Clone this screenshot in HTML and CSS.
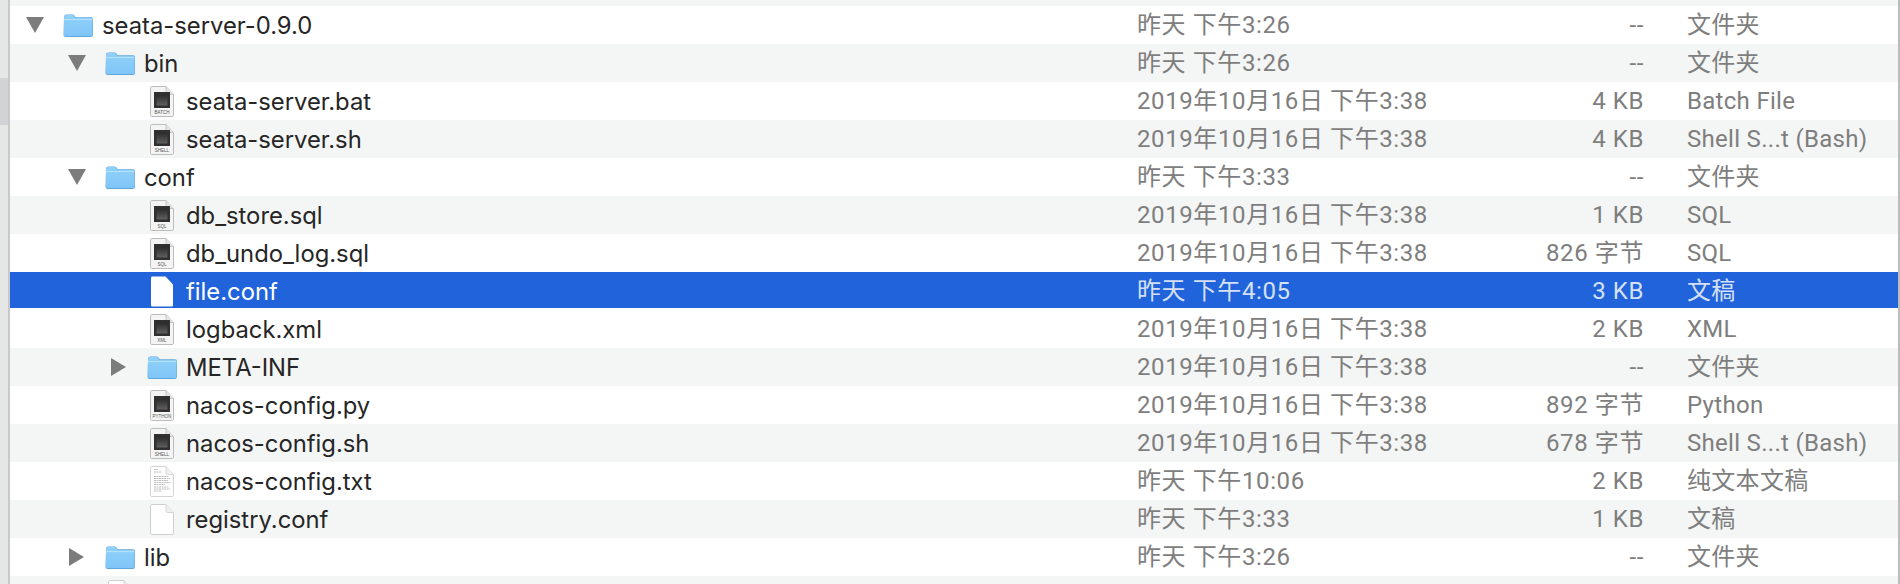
FILE: index.html
```html
<!DOCTYPE html>
<html lang="zh-CN">
<head>
    <meta charset="UTF-8">
    <title>seata-server-0.9.0</title>
    <link rel="stylesheet" href="styles.css">
</head>
<body>
    <!-- shared icons -->
    <svg class="defs" width="0" height="0">
        <defs>
            <linearGradient id="folder-fill" x1="0" y1="0" x2="0" y2="1">
                <stop offset="0" stop-color="#90d1fa"/>
                <stop offset="1" stop-color="#7fc5f7"/>
            </linearGradient>
            <linearGradient id="exec-fill" x1="0" y1="0" x2="0" y2="1">
                <stop offset="0" stop-color="#2a2a2a"/>
                <stop offset="1" stop-color="#5f5f5f"/>
            </linearGradient>
        </defs>
        <symbol id="folder" viewBox="0 0 30 24">
            <path d="M1 4.5C1 2.5 1.8 1.5 3.5 1.5H9C10.5 1.5 11 2 11.8 3L12.800 4.200H28C29.200 4.200 30 5 30 6.200V21.500C30 23 29.200 24 28 24H2.500C1.200 24 0.500 23 0.500 21.500Z" fill="#5fa8de"/>
            <path d="M1 5C1 3 2 2 3.500 2H9C10 2 10.800 2.500 11.500 3.500L12.500 5H28C29 5 29.500 5.600 29.500 6.500V21.500C29.500 22.500 29 23 28 23H2.500C1.500 23 1 22.500 1 21.500Z" fill="url(#folder-fill)"/>
            <path d="M1 6.600H29.500" stroke="#b9e3fd" stroke-width="1"/>
        </symbol>
        <symbol id="doc" viewBox="0 0 24 31">
            <path d="M0.500 2C0.500 1 1 0.500 2 0.500H16L23.500 8.500V29C23.500 30 23 30.500 22 30.500H2C1 30.500 0.500 30 0.500 29Z" fill="#fff" stroke="#cfcfcf"/>
            <path d="M16 0.500V7C16 8 16.500 8.500 17.500 8.500H23.500" fill="#f0f0f0" stroke="#d4d4d4"/>
        </symbol>
        <symbol id="exec" viewBox="0 0 24 31">
            <path d="M0.500 2C0.500 1 1 0.500 2 0.500H16L23.500 8.500V29C23.500 30 23 30.500 22 30.500H2C1 30.500 0.500 30 0.500 29Z" fill="#f4f4f4" stroke="#bcbcbc"/>
            <path d="M16 0.500V7C16 8 16.500 8.500 17.500 8.500H23.500" fill="#e4e4e4" stroke="#c4c4c4"/>
            <rect x="4" y="6" width="16" height="16" fill="#303030"/>
            <rect x="6.500" y="8.500" width="11" height="11" fill="url(#exec-fill)"/>
        </symbol>
        <symbol id="text-doc" viewBox="0 0 24 31">
            <path d="M0.500 2C0.500 1 1 0.500 2 0.500H16L23.500 8.500V29C23.500 30 23 30.500 22 30.500H2C1 30.500 0.500 30 0.500 29Z" fill="#fff" stroke="#d4d4d4"/>
            <path d="M16 0.500V7C16 8 16.500 8.500 17.500 8.500H23.500" fill="#f0f0f0" stroke="#d8d8d8"/>
            <path d="M4 3.500H8M4 6H12M4 10.500H19M4 12.500H20M4 14.500H18M4 16.500H20M4 18.500H15M4 21H19M4 23H20M4 25H12" stroke="#bdbdbd" stroke-width="1" stroke-dasharray="2 0.500"/>
        </symbol>
        <symbol id="tw-down" viewBox="0 0 18 16">
            <polygon points="0,0 18,0 9,16" fill="#7c7c7c"/>
        </symbol>
        <symbol id="tw-right" viewBox="0 0 15 18">
            <polygon points="0,0 15,9 0,18" fill="#7c7c7c"/>
        </symbol>
    </svg>

    <div class="window">
        <div class="sidebar-edge">
            <div class="sidebar-active"></div>
        </div>

        <div class="list">
            <div class="row-cut"></div>

            <div class="row">
                <div class="name lv0">
                    <span class="twisty"><svg class="tw-d"><use href="#tw-down"/></svg></span>
                    <span class="icon"><svg class="folder"><use href="#folder"/></svg></span>
                    <span class="fname">seata-server-0.9.0</span>
                </div>
                <div class="date">昨天 下午3:26</div>
                <div class="size">--</div>
                <div class="kind">文件夹</div>
            </div>

            <div class="row">
                <div class="name lv1">
                    <span class="twisty"><svg class="tw-d"><use href="#tw-down"/></svg></span>
                    <span class="icon"><svg class="folder"><use href="#folder"/></svg></span>
                    <span class="fname">bin</span>
                </div>
                <div class="date">昨天 下午3:26</div>
                <div class="size">--</div>
                <div class="kind">文件夹</div>
            </div>

            <div class="row">
                <div class="name lv2">
                    <span class="twisty"></span>
                    <span class="icon"><svg class="file" viewBox="0 0 24 31"><use href="#exec"/><text class="badge" x="12" y="28">BATCH</text></svg></span>
                    <span class="fname">seata-server.bat</span>
                </div>
                <div class="date">2019年10月16日 下午3:38</div>
                <div class="size">4 KB</div>
                <div class="kind">Batch File</div>
            </div>

            <div class="row">
                <div class="name lv2">
                    <span class="twisty"></span>
                    <span class="icon"><svg class="file" viewBox="0 0 24 31"><use href="#exec"/><text class="badge" x="12" y="28">SHELL</text></svg></span>
                    <span class="fname">seata-server.sh</span>
                </div>
                <div class="date">2019年10月16日 下午3:38</div>
                <div class="size">4 KB</div>
                <div class="kind">Shell S...t (Bash)</div>
            </div>

            <div class="row">
                <div class="name lv1">
                    <span class="twisty"><svg class="tw-d"><use href="#tw-down"/></svg></span>
                    <span class="icon"><svg class="folder"><use href="#folder"/></svg></span>
                    <span class="fname">conf</span>
                </div>
                <div class="date">昨天 下午3:33</div>
                <div class="size">--</div>
                <div class="kind">文件夹</div>
            </div>

            <div class="row">
                <div class="name lv2">
                    <span class="twisty"></span>
                    <span class="icon"><svg class="file" viewBox="0 0 24 31"><use href="#exec"/><text class="badge" x="12" y="28">SQL</text></svg></span>
                    <span class="fname">db_store.sql</span>
                </div>
                <div class="date">2019年10月16日 下午3:38</div>
                <div class="size">1 KB</div>
                <div class="kind">SQL</div>
            </div>

            <div class="row">
                <div class="name lv2">
                    <span class="twisty"></span>
                    <span class="icon"><svg class="file" viewBox="0 0 24 31"><use href="#exec"/><text class="badge" x="12" y="28">SQL</text></svg></span>
                    <span class="fname">db_undo_log.sql</span>
                </div>
                <div class="date">2019年10月16日 下午3:38</div>
                <div class="size">826 字节</div>
                <div class="kind">SQL</div>
            </div>

            <!-- selected -->
            <div class="row selected">
                <div class="name lv2">
                    <span class="twisty"></span>
                    <span class="icon"><svg class="file" viewBox="0 0 24 31"><path d="M1 2C1 1 1.500 0.500 2.500 0.500H15.500L23 8.500V29C23 30 22.500 30.500 21.500 30.500H2.500C1.500 30.500 1 30 1 29Z" fill="#fff"/></svg></span>
                    <span class="fname">file.conf</span>
                </div>
                <div class="date">昨天 下午4:05</div>
                <div class="size">3 KB</div>
                <div class="kind">文稿</div>
            </div>

            <div class="row">
                <div class="name lv2">
                    <span class="twisty"></span>
                    <span class="icon"><svg class="file" viewBox="0 0 24 31"><use href="#exec"/><text class="badge" x="12" y="28">XML</text></svg></span>
                    <span class="fname">logback.xml</span>
                </div>
                <div class="date">2019年10月16日 下午3:38</div>
                <div class="size">2 KB</div>
                <div class="kind">XML</div>
            </div>

            <div class="row">
                <div class="name lv2">
                    <span class="twisty"><svg class="tw-r"><use href="#tw-right"/></svg></span>
                    <span class="icon"><svg class="folder"><use href="#folder"/></svg></span>
                    <span class="fname">META-INF</span>
                </div>
                <div class="date">2019年10月16日 下午3:38</div>
                <div class="size">--</div>
                <div class="kind">文件夹</div>
            </div>

            <div class="row">
                <div class="name lv2">
                    <span class="twisty"></span>
                    <span class="icon"><svg class="file" viewBox="0 0 24 31"><use href="#exec"/><text class="badge" x="12" y="28">PYTHON</text></svg></span>
                    <span class="fname">nacos-config.py</span>
                </div>
                <div class="date">2019年10月16日 下午3:38</div>
                <div class="size">892 字节</div>
                <div class="kind">Python</div>
            </div>

            <div class="row">
                <div class="name lv2">
                    <span class="twisty"></span>
                    <span class="icon"><svg class="file" viewBox="0 0 24 31"><use href="#exec"/><text class="badge" x="12" y="28">SHELL</text></svg></span>
                    <span class="fname">nacos-config.sh</span>
                </div>
                <div class="date">2019年10月16日 下午3:38</div>
                <div class="size">678 字节</div>
                <div class="kind">Shell S...t (Bash)</div>
            </div>

            <div class="row">
                <div class="name lv2">
                    <span class="twisty"></span>
                    <span class="icon"><svg class="file"><use href="#text-doc"/></svg></span>
                    <span class="fname">nacos-config.txt</span>
                </div>
                <div class="date">昨天 下午10:06</div>
                <div class="size">2 KB</div>
                <div class="kind">纯文本文稿</div>
            </div>

            <div class="row">
                <div class="name lv2">
                    <span class="twisty"></span>
                    <span class="icon"><svg class="file"><use href="#doc"/></svg></span>
                    <span class="fname">registry.conf</span>
                </div>
                <div class="date">昨天 下午3:33</div>
                <div class="size">1 KB</div>
                <div class="kind">文稿</div>
            </div>

            <div class="row">
                <div class="name lv1">
                    <span class="twisty"><svg class="tw-r"><use href="#tw-right"/></svg></span>
                    <span class="icon"><svg class="folder"><use href="#folder"/></svg></span>
                    <span class="fname">lib</span>
                </div>
                <div class="date">昨天 下午3:26</div>
                <div class="size">--</div>
                <div class="kind">文件夹</div>
            </div>

            <!-- next row, cut off by the window -->
            <div class="row row-last">
                <div class="name lv1">
                    <span class="twisty"></span>
                    <span class="icon"><svg class="file"><use href="#doc"/></svg></span>
                </div>
            </div>
        </div>
    </div>
</body>
</html>
```

FILE: styles.css
```css
html, body {
    margin: 0;
    padding: 0;
    height: 100%;
    overflow: hidden;
    background: #fff;
}

.defs {
    position: absolute;
}

.window {
    display: flex;
    height: 584px;
    overflow: hidden;
    font-family: Inter, "Noto Sans CJK SC", sans-serif;
    font-size: 23.8px;
}

/* strip of the sidebar on the left */
.sidebar-edge {
    flex: none;
    width: 8px;
    padding-top: 78px;
    background: #e5e6e6;
    border-right: 2px solid #c9c9c9;
}

.sidebar-active {
    height: 47px;
    background: #d0d4d6;
}

.list {
    flex: none;
    width: 1888px;
    border-right: 2px solid #bcbcbc;
}

.row-cut {
    height: 6px;
    background: #f4f5f5;
}

.row {
    display: grid;
    grid-template-columns: 1127px 320px 187px 1fr;
    align-items: center;
    box-sizing: border-box;
    height: 38px;
    background: #fff;
}

/* stripes are offset by the cut row */
.row:nth-child(odd) {
    background: #f4f5f5;
}

.row.selected {
    padding-top: 2px;
    background: #2063da;
    border-bottom: 2px solid #fff;
}

.name {
    display: flex;
    align-items: center;
    height: 38px;
}

.selected .name {
    height: 34px;
}

.lv0 { padding-left: 15px; }
.lv1 { padding-left: 57px; }
.lv2 { padding-left: 99px; }

.twisty {
    flex: none;
    display: flex;
    align-items: center;
    width: 38px;
}

.tw-d {
    width: 18px;
    height: 16px;
    margin-left: 1px;
}

.tw-r {
    width: 15px;
    height: 18px;
    margin-left: 2px;
}

.icon {
    flex: none;
    display: flex;
    justify-content: center;
    align-items: center;
    width: 30px;
}

.folder {
    width: 30px;
    height: 24px;
}

.file {
    width: 24px;
    height: 31px;
}

.badge {
    font-family: "Liberation Sans", sans-serif;
    font-size: 4.500px;
    text-anchor: middle;
    fill: #555;
}

.fname {
    margin-left: 9px;
    color: #262626;
    white-space: nowrap;
}

/* fixed line height keeps the baseline the same with or without CJK */
.date, .size, .kind {
    font-family: Roboto, "Noto Sans CJK SC", sans-serif;
    font-size: 24px;
    line-height: 30px;
    letter-spacing: 0.6px;
    color: #7e7e7e;
    white-space: nowrap;
}

.size {
    text-align: right;
}

.kind {
    padding-left: 43px;
    letter-spacing: 0.3px;
}

.selected .fname {
    color: #fff;
}

.selected .date,
.selected .size,
.selected .kind {
    color: #d5e0f6;
}
```
